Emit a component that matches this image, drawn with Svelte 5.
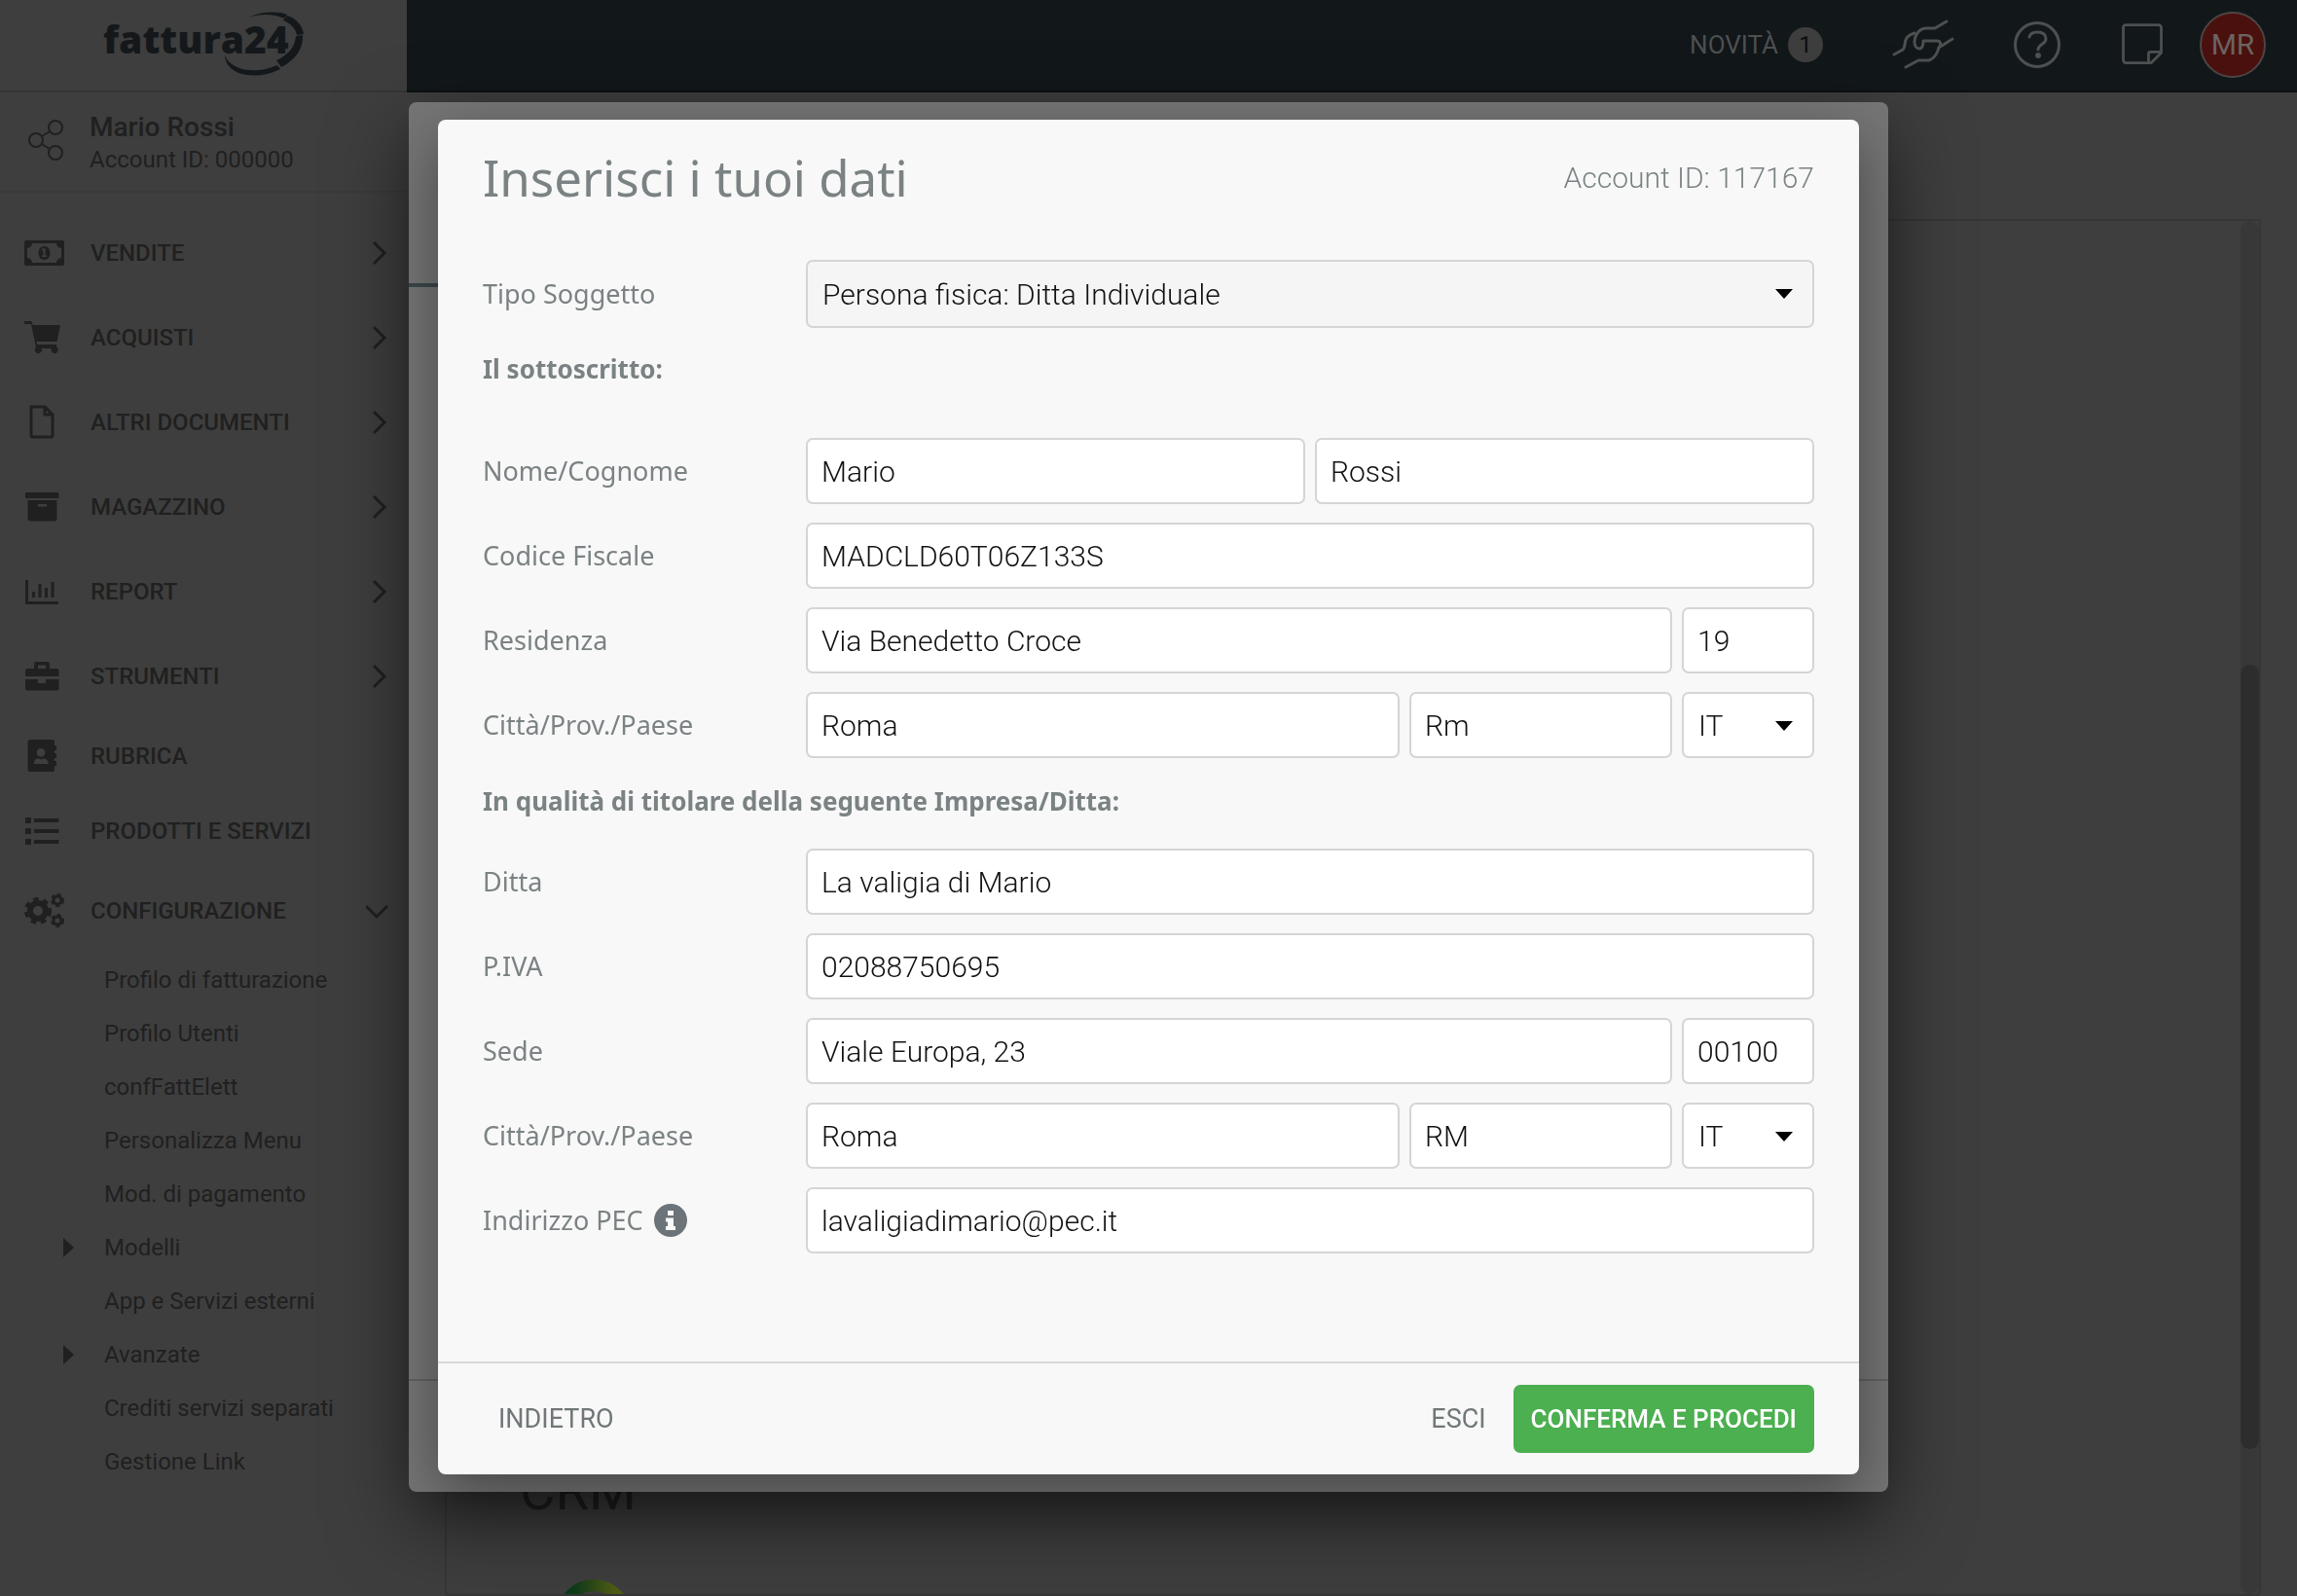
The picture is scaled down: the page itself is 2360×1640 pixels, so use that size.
<script>
  const menu = [
    { label: 'VENDITE', icon: 'cash', size: 'tall', arrow: 'right' },
    { label: 'ACQUISTI', icon: 'cart', size: 'tall', arrow: 'right' },
    { label: 'ALTRI DOCUMENTI', icon: 'file', size: 'tall', arrow: 'right' },
    { label: 'MAGAZZINO', icon: 'box', size: 'tall', arrow: 'right' },
    { label: 'REPORT', icon: 'chart', size: 'tall', arrow: 'right' },
    { label: 'STRUMENTI', icon: 'case', size: 'tall', arrow: 'right' },
    { label: 'RUBRICA', icon: 'book', size: 'short' },
    { label: 'PRODOTTI E SERVIZI', icon: 'list', size: 'short' },
    { label: 'CONFIGURAZIONE', icon: 'gears', size: 'tall', arrow: 'down' }
  ];

  const submenu = [
    { label: 'Profilo di fatturazione' },
    { label: 'Profilo Utenti' },
    { label: 'confFattElett' },
    { label: 'Personalizza Menu' },
    { label: 'Mod. di pagamento' },
    { label: 'Modelli', nested: true },
    { label: 'App e Servizi esterni' },
    { label: 'Avanzate', nested: true },
    { label: 'Crediti servizi separati' },
    { label: 'Gestione Link' }
  ];

  let form = $state({
    tipo: 'Persona fisica: Ditta Individuale',
    nome: 'Mario',
    cognome: 'Rossi',
    cf: 'MADCLD60T06Z133S',
    via: 'Via Benedetto Croce',
    civico: '19',
    citta: 'Roma',
    prov: 'Rm',
    paese: 'IT',
    ditta: 'La valigia di Mario',
    piva: '02088750695',
    sede: 'Viale Europa, 23',
    cap: '00100',
    sedeCitta: 'Roma',
    sedeProv: 'RM',
    sedePaese: 'IT',
    pec: 'lavaligiadimario@pec.it'
  });

  // Each cog is a hub ring with a dashed ring around it for the teeth.
  const cogs = [
    { cx: 15, cy: 19, r: 8, w: 6, dash: '5 4.42' },
    { cx: 35, cy: 8, r: 4, w: 3, dash: '3.6 2.68' },
    { cx: 35, cy: 29, r: 4, w: 3, dash: '3.6 2.68' }
  ];
</script>

{#snippet icon(name)}
  <svg class="icon" viewBox="0 0 44 38" aria-hidden="true">
    {#if name === 'cash'}
      <path fill-rule="evenodd" d="M3 6h37a2 2 0 0 1 2 2v22a2 2 0 0 1-2 2H3a2 2 0 0 1-2-2V8a2 2 0 0 1 2-2zM9 9a5 5 0 0 1-5 5v10a5 5 0 0 1 5 5h25a5 5 0 0 1 5-5V14a5 5 0 0 1-5-5z" />
      <path fill-rule="evenodd" d="M21.500 12c4 0 6 3.500 6 7s-2 7-6 7-6-3.500-6-7 2-7 6-7zM19 14.500v2h1.500v5H19v1.500h5v-1.500h-1.500v-7z" />
    {:else if name === 'cart'}
      <path d="M1 2h7.500l1 4H38l-3.500 17H13.500l.6 3H34v2.500a3.500 3.500 0 1 1-5 1.500H18.500a3.500 3.500 0 1 1-5.500-1L8 5H1z" />
    {:else if name === 'file'}
      <path class="line" d="M8 3h14l8 8v21.500a1.500 1.500 0 0 1-1.500 1.500h-19A1.500 1.500 0 0 1 8 32.500zM22 3v8h8" />
    {:else if name === 'box'}
      <path fill-rule="evenodd" d="M3 4h32a1.500 1.500 0 0 1 1.500 1.500V10H2V5.500A1.500 1.500 0 0 1 3 4zM4.500 12h30v19a2.500 2.500 0 0 1-2.500 2.500H7A2.500 2.500 0 0 1 4.500 31zM15 16v2.500h9V16z" />
    {:else if name === 'chart'}
      <path class="line" d="M3.500 7v23.500H36M10.500 19v6M17 11v14M23.500 15v10M30 9v16" />
    {:else if name === 'case'}
      <path fill-rule="evenodd" d="M13 4h12a2 2 0 0 1 2 2v5h7a2.500 2.500 0 0 1 2.500 2.500V19H2v-5.500A2.500 2.500 0 0 1 4.500 11H11V6a2 2 0 0 1 2-2zM15 7.500V11h8V7.500zM2 22h13v4h8v-4h13.500v9.500a2 2 0 0 1-2 2H4a2 2 0 0 1-2-2z" />
    {:else if name === 'book'}
      <path fill-rule="evenodd" d="M7 2h23a2 2 0 0 1 2 2v4h2v5h-2v3h2v5h-2v3h2v5h-2v4a2 2 0 0 1-2 2H7a2.500 2.500 0 0 1-2.500-2.500v-28A2.500 2.500 0 0 1 7 2zM18 11a4.300 4.300 0 1 0 .01 0zM11 27h14.500c0-4-2.500-5.500-4-5.500-2 1-5 1-7 0-1.500 0-3.500 1.500-3.500 5.500z" />
    {:else if name === 'list'}
      <path d="M2 5h6v6H2zM2 16h6v6H2zM2 27h6v6H2zM11 6h25.500v4H11zM11 17h25.500v4H11zM11 28h25.500v4H11z" />
    {:else if name === 'gears'}
      {#each cogs as c}
        <circle class="cog" cx={c.cx} cy={c.cy} r={c.r} stroke-width={c.w} />
        <circle class="cog" cx={c.cx} cy={c.cy} r={c.r + c.w / 2} stroke-width={c.w} stroke-dasharray={c.dash} />
      {/each}
    {/if}
  </svg>
{/snippet}

<div class="app">
  <aside class="sidebar">
    <div class="brand">
      <svg class="logo" viewBox="0 0 210 68" role="img" aria-label="fattura24">
        <text x="2" y="43" class="logo-text">fattura24</text>
        <path d="M152 6C163 0 180-1 191 3l-3 4C177 2 163 2 152 6z" />
        <path d="M191 4c10 3 16 11 17 19l-7 1c-1-6-6-12-14-15z" />
        <path d="M207 24c1 14-8 26-22 33l-5-7c13-6 19-14 20-25z" />
        <path d="M127 45c6 15 31 20 54 10l3 4c-26 13-56 6-57-14z" />
      </svg>
    </div>
    <div class="account">
      <svg class="share" viewBox="0 0 40 44" aria-hidden="true">
        <circle cx="29" cy="9" r="7" /><circle cx="9" cy="22" r="7" /><circle cx="29" cy="35" r="7" />
        <path d="M15 18l8-5M15 26l8 5" />
      </svg>
      <div>
        <div class="account-name">Mario Rossi</div>
        <div class="account-id">Account ID: 000000</div>
      </div>
    </div>
    <nav class="menu">
      {#each menu as item}
        <a class="item {item.size}" href="#{item.icon}">
          {@render icon(item.icon)}
          <span>{item.label}</span>
          {#if item.arrow}
            <svg class="arrow" viewBox="0 0 24 24" aria-hidden="true">
              <path d={item.arrow === 'right' ? 'M8 1l11 11L8 23' : 'M0 7l11 11L22 7'} />
            </svg>
          {/if}
        </a>
      {/each}
      <div class="sub">
        {#each submenu as item}
          <a href="#sub" class:nested={item.nested}>{item.label}</a>
        {/each}
      </div>
    </nav>
  </aside>

  <div class="main">
    <header class="topbar">
      <a class="news" href="#novita">NOVITÀ <span class="badge">1</span></a>
      <button class="tool" aria-label="Supporto">
        <svg viewBox="0 0 68 56" aria-hidden="true">
          <path d="M3 38l9-5c3-2 1-8 4-12 2-3 5-4 8-5" />
          <path d="M57 4l-12 7H35c-7 1-11 8-11 14 0 4 2 7 5 7s4-3 4-8h14c4 0 5 4 2 7-2 8-5 11-10 13H28l-13 7" />
          <path d="M49 31l14-9" />
        </svg>
      </button>
      <button class="tool" aria-label="Aiuto">
        <svg viewBox="0 0 56 56" aria-hidden="true">
          <circle cx="28" cy="28" r="22.500" />
          <path d="M20 20c1-4 4-5 8-5 5 0 9 2 9 7 0 6-8 5-8 11" />
          <circle cx="29" cy="39" r="1.500" />
        </svg>
      </button>
      <button class="tool note" aria-label="Note">
        <svg viewBox="0 0 56 56" aria-hidden="true">
          <path d="M10 6h36a3 3 0 0 1 3 3v28L38 48H10a3 3 0 0 1-3-3V9a3 3 0 0 1 3-3zM49 36H37a2 2 0 0 0-2 2v10" />
        </svg>
      </button>
      <button class="avatar">MR</button>
    </header>
    <main class="content">
      <div class="card">
        <div class="card-body">
          <h2>CRM</h2>
          <svg class="ring" viewBox="0 0 80 80" aria-hidden="true">
            <defs>
              <linearGradient id="ring" x1="0" x2="1">
                <stop offset="0.200" stop-color="#0f3a1a" />
                <stop offset="0.800" stop-color="#4d5c14" />
              </linearGradient>
            </defs>
            <circle cx="40" cy="40" r="33" fill="none" stroke="url(#ring)" stroke-width="12" />
          </svg>
        </div>
        <div class="track"><div class="thumb"></div></div>
      </div>
    </main>
  </div>
</div>

<div class="layer">
  <div class="back-dialog">
    <div class="back-tab"></div>
    <div class="back-foot"></div>
  </div>
</div>

<div class="layer">
  <form class="dialog" aria-labelledby="title" onsubmit={(e) => e.preventDefault()}>
    <header class="dialog-head">
      <h1 id="title">Inserisci i tuoi dati</h1>
      <span class="dialog-account">Account ID: 117167</span>
    </header>

    <div class="dialog-body">
      <div class="row">
        <label for="tipo">Tipo Soggetto</label>
        <div class="fields">
          <span class="select grow muted">
            <select id="tipo" bind:value={form.tipo}><option>Persona fisica: Ditta Individuale</option></select>
          </span>
        </div>
      </div>

      <h3 class="spaced">Il sottoscritto:</h3>

      <div class="rows">
        <div class="row">
          <label for="nome">Nome/Cognome</label>
          <div class="fields">
            <input class="grow" id="nome" bind:value={form.nome} />
            <input class="grow" aria-label="Cognome" bind:value={form.cognome} />
          </div>
        </div>
        <div class="row">
          <label for="cf">Codice Fiscale</label>
          <div class="fields"><input class="grow" id="cf" bind:value={form.cf} /></div>
        </div>
        <div class="row">
          <label for="via">Residenza</label>
          <div class="fields">
            <input class="grow" id="via" bind:value={form.via} />
            <input class="small" aria-label="Numero civico" bind:value={form.civico} />
          </div>
        </div>
        <div class="row">
          <label for="citta">Città/Prov./Paese</label>
          <div class="fields">
            <input class="grow" id="citta" bind:value={form.citta} />
            <input class="medium" aria-label="Provincia" bind:value={form.prov} />
            <span class="select small"><select aria-label="Paese" bind:value={form.paese}><option>IT</option></select></span>
          </div>
        </div>
      </div>

      <h3>In qualità di titolare della seguente Impresa/Ditta:</h3>

      <div class="rows">
        <div class="row">
          <label for="ditta">Ditta</label>
          <div class="fields"><input class="grow" id="ditta" bind:value={form.ditta} /></div>
        </div>
        <div class="row">
          <label for="piva">P.IVA</label>
          <div class="fields"><input class="grow" id="piva" bind:value={form.piva} /></div>
        </div>
        <div class="row">
          <label for="sede">Sede</label>
          <div class="fields">
            <input class="grow" id="sede" bind:value={form.sede} />
            <input class="small" aria-label="CAP" bind:value={form.cap} />
          </div>
        </div>
        <div class="row">
          <label for="sede-citta">Città/Prov./Paese</label>
          <div class="fields">
            <input class="grow" id="sede-citta" bind:value={form.sedeCitta} />
            <input class="medium" aria-label="Provincia della sede" bind:value={form.sedeProv} />
            <span class="select small"><select aria-label="Paese della sede" bind:value={form.sedePaese}><option>IT</option></select></span>
          </div>
        </div>
        <div class="row">
          <label for="pec">
            Indirizzo PEC
            <svg class="info" viewBox="0 0 34 34" aria-hidden="true">
              <circle cx="17" cy="17" r="17" />
              <path d="M14 7h6v5h-6zM12 14.500h8v8.500h2v4H12v-4h2v-4.500h-2z" />
            </svg>
          </label>
          <div class="fields"><input class="grow" id="pec" type="email" bind:value={form.pec} /></div>
        </div>
      </div>
    </div>

    <footer class="dialog-foot">
      <button type="button" class="flat">INDIETRO</button>
      <span class="spacer"></span>
      <button type="button" class="flat">ESCI</button>
      <button type="submit" class="primary">CONFERMA E PROCEDI</button>
    </footer>
  </form>
</div>

<style>
  :global(body) {
    margin: 0;
    background: #3e3e3e;
    font-family: Roboto, sans-serif;
  }
  :global(*) {
    box-sizing: border-box;
  }
  button {
    border: 0;
    background: none;
    padding: 0;
    font-family: inherit;
    cursor: pointer;
  }
  a {
    color: inherit;
    text-decoration: none;
  }

  .app {
    display: flex;
    height: 100vh;
    overflow: hidden;
    color: #202020;
  }
  .sidebar {
    width: 418px;
    flex: none;
    background: #3e3e3e;
  }
  .brand {
    height: 95px;
    border-bottom: 2px solid #343434;
    display: flex;
    justify-content: center;
    padding-top: 12px;
  }
  .logo {
    width: 210px;
    height: 68px;
    fill: #14181b;
    overflow: visible;
  }
  .logo-text {
    font: 800 39px 'Open Sans', sans-serif;
  }
  .account {
    height: 103px;
    padding: 0 28px 4px;
    border-bottom: 2px solid #3a3a3a;
    display: flex;
    align-items: center;
    gap: 24px;
  }
  .share {
    width: 40px;
    height: 44px;
    fill: none;
    stroke: #202020;
    stroke-width: 2;
  }
  .account-name {
    padding-top: 6px;
    font-size: 28px;
    line-height: 34px;
    font-weight: 500;
  }
  .account-id {
    font-size: 24px;
    line-height: 32px;
  }
  .menu {
    padding-top: 18px;
  }
  .item {
    display: flex;
    align-items: center;
    gap: 25px;
    padding: 0 18px 0 24px;
    font-size: 24px;
    font-weight: 500;
  }
  .item.tall {
    height: 87px;
  }
  .item.short {
    height: 77px;
  }
  .item span {
    flex: 1;
  }
  .icon {
    width: 44px;
    height: 38px;
    fill: #202020;
  }
  .line,
  .arrow {
    fill: none;
    stroke: #202020;
    stroke-width: 3;
  }
  .cog {
    fill: none;
    stroke: #202020;
  }
  .arrow {
    width: 24px;
    height: 24px;
  }
  .sub {
    display: flex;
    flex-direction: column;
  }
  .sub a {
    display: flex;
    align-items: center;
    height: 55px;
    padding-left: 107px;
    font-size: 24px;
  }
  .sub a.nested {
    padding-left: 65px;
    gap: 31px;
  }
  .sub a.nested::before {
    content: '';
    border-left: 11px solid #202020;
    border-top: 10px solid transparent;
    border-bottom: 10px solid transparent;
  }

  .main {
    flex: 1;
    display: flex;
    flex-direction: column;
  }
  .topbar {
    height: 95px;
    background: #12171a;
    border-bottom: 2px solid #0c1012;
    display: flex;
    align-items: center;
    justify-content: flex-end;
    padding: 0 32px 2px 0;
    color: #4d5051;
  }
  .news {
    display: flex;
    align-items: center;
    gap: 10px;
    font-size: 26px;
    margin-right: 70px;
  }
  .badge {
    width: 36px;
    height: 36px;
    border-radius: 50%;
    background: #3e3e3e;
    color: #0c0e10;
    font-size: 24px;
    display: flex;
    align-items: center;
    justify-content: center;
  }
  .tool {
    width: 68px;
    margin-right: 48px;
  }
  .tool.note {
    width: 52px;
    margin-right: 33px;
  }
  .tool svg {
    display: block;
    width: 100%;
    height: 56px;
    overflow: visible;
    fill: none;
    stroke: #4d5051;
    stroke-width: 3;
    stroke-linejoin: round;
    stroke-linecap: round;
  }
  .avatar {
    width: 68px;
    height: 68px;
    border-radius: 50%;
    border: 2px solid #4d4544;
    background: #4a100d;
    color: #6b6361;
    font-size: 30px;
  }
  .content {
    flex: 1;
    background: #3e3e3e;
    padding: 130px 37px 0 39px;
    display: flex;
  }
  .card {
    flex: 1;
    border: 2px solid #363636;
    border-radius: 4px;
    display: flex;
  }
  .card-body {
    flex: 1;
    display: flex;
    flex-direction: column;
    justify-content: flex-end;
    align-items: flex-start;
    padding-left: 75px;
    overflow: hidden;
  }
  .card-body h2 {
    margin: 0 0 60px;
    font-size: 56px;
    line-height: 60px;
    font-weight: 400;
  }
  .ring {
    width: 80px;
    height: 80px;
    margin: 0 0 -64px 36px;
  }
  .track {
    width: 19px;
    background: #383838;
    border-radius: 10px;
    padding-top: 456px;
  }
  .thumb {
    height: 806px;
    border-radius: 10px;
    background: #2d2d2d;
  }

  .layer {
    position: fixed;
    inset: 0;
    display: flex;
    justify-content: center;
    align-items: flex-start;
  }
  .back-dialog {
    width: 1520px;
    height: 1428px;
    margin-top: 105px;
    border-radius: 8px;
    background: #757575;
    box-shadow: 0 30px 80px rgba(0, 0, 0, 0.5);
    display: flex;
    flex-direction: column;
    justify-content: space-between;
  }
  .back-tab {
    width: 240px;
    height: 190px;
    border-bottom: 4px solid #3b474b;
  }
  .back-foot {
    height: 116px;
    border-top: 2px solid #616161;
  }

  .dialog {
    width: 1460px;
    margin-top: 123px;
    border-radius: 8px;
    background: #f8f8f8;
    color: #7b8283;
    box-shadow: 0 20px 60px rgba(0, 0, 0, 0.4);
  }
  .dialog-head {
    display: flex;
    align-items: center;
    justify-content: space-between;
    height: 118px;
    padding: 0 46px;
  }
  h1 {
    margin: 0;
    font: 400 51px/72px 'Noto Sans', sans-serif;
  }
  .dialog-account {
    font-size: 30px;
    font-weight: 300;
  }
  .dialog-body {
    padding: 26px 46px 111px;
  }
  .rows {
    display: grid;
    gap: 19px;
  }
  .row {
    display: grid;
    grid-template-columns: 332px 1fr;
    align-items: center;
  }
  label {
    display: flex;
    align-items: center;
    gap: 11px;
    font: 400 27px/36px 'Noto Sans', sans-serif;
  }
  h3 {
    margin: 0;
    padding: 26px 0 31px;
    font: 700 26px/36px 'Noto Sans', sans-serif;
  }
  h3.spaced {
    padding: 24px 0 53px;
  }
  .info {
    width: 34px;
    height: 34px;
    fill: #6c7479;
  }
  .info path {
    fill: #f8f8f8;
  }
  .fields {
    display: flex;
    gap: 10px;
  }
  input,
  select {
    height: 68px;
    width: 100%;
    min-width: 0;
    border: 2px solid #d3d5d6;
    border-radius: 7px;
    background: #fff;
    color: #111;
    padding: 0 14px;
    font: 300 30px Roboto, sans-serif;
  }
  select {
    appearance: none;
    padding: 0 15px;
  }
  .muted select {
    height: 70px;
    background: #f5f5f5;
  }
  .select {
    position: relative;
  }
  .select::after {
    content: '';
    position: absolute;
    right: 22px;
    top: 30px;
    border-top: 10px solid #000;
    border-left: 9px solid transparent;
    border-right: 9px solid transparent;
    pointer-events: none;
  }
  .grow {
    flex: 1;
  }
  .small {
    flex: none;
    width: 136px;
  }
  .medium {
    flex: none;
    width: 270px;
  }

  .dialog-foot {
    height: 116px;
    border-top: 2px solid #d6d8d9;
    display: flex;
    align-items: center;
    gap: 12px;
    padding: 0 46px;
  }
  .flat {
    padding: 0 16px;
    color: #707778;
    font-size: 27px;
  }
  .primary {
    height: 70px;
    padding: 0 18px;
    border-radius: 7px;
    background: #4caf50;
    color: #fff;
    font-size: 26px;
    font-weight: 500;
  }
  .spacer {
    flex: 1;
  }
</style>
